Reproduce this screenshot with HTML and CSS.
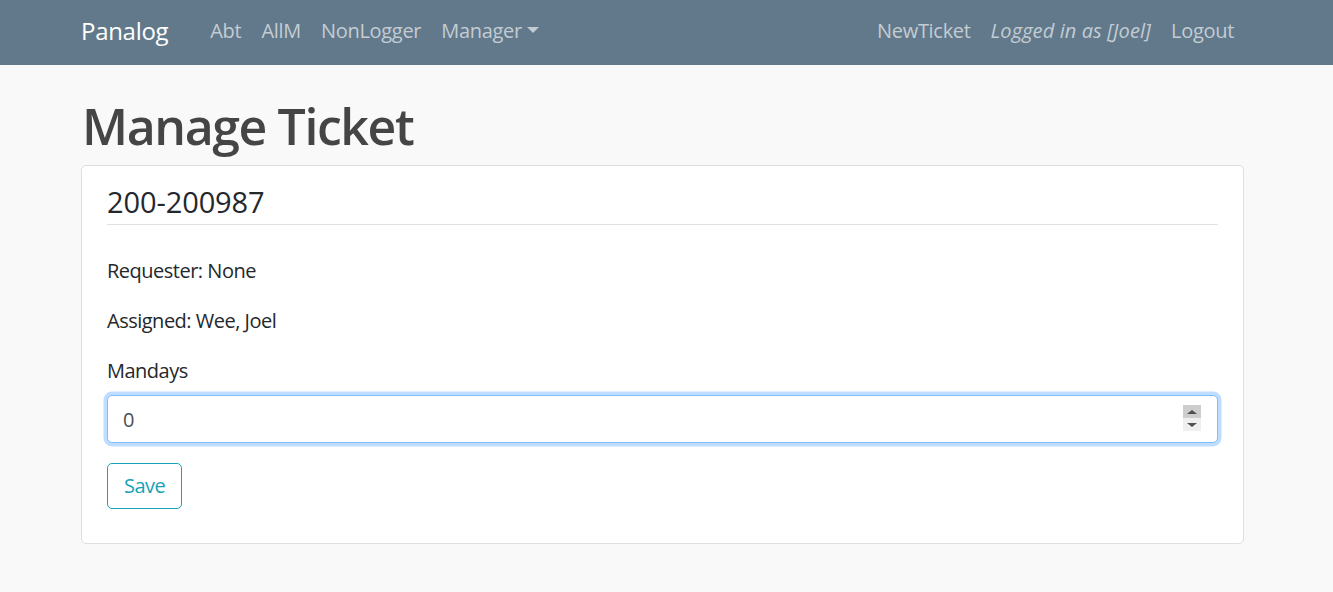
FILE: index.html
```html
<!DOCTYPE html>
<html lang="en">
<head>
<meta charset="utf-8">
<title>Manage Ticket - Panalog</title>
<link rel="stylesheet" href="styles.css">
</head>
<body>
<nav class="navbar">
  <div class="nav-inner">
    <a class="brand" href="#">Panalog</a>
    <ul class="nav-list">
      <li><a class="nav-link" href="#">Abt</a></li>
      <li><a class="nav-link" href="#">AllM</a></li>
      <li><a class="nav-link" href="#">NonLogger</a></li>
      <li><a class="nav-link dropdown-toggle" href="#">Manager</a></li>
    </ul>
    <ul class="nav-list nav-right">
      <li><a class="nav-link" href="#">NewTicket</a></li>
      <li><span class="nav-link nav-text">Logged in as [Joel]</span></li>
      <li><a class="nav-link" href="#">Logout</a></li>
    </ul>
  </div>
</nav>
<main class="container">
  <h1 class="page-title">Manage Ticket</h1>
  <div class="card">
    <div class="card-body">
      <h4 class="card-title">200-200987</h4>
      <p class="info">Requester: None</p>
      <p class="info">Assigned: Wee, Joel</p>
      <form class="ticket-form">
        <div class="form-group">
          <label class="form-label" for="mandays">Mandays</label>
          <div class="input-wrap">
            <input class="form-control" id="mandays" type="number" value="0">
            <span class="spinner" aria-hidden="true">
              <span class="spin spin-up"><span class="tri-up"></span></span>
              <span class="spin spin-down"><span class="tri-down"></span></span>
            </span>
          </div>
        </div>
        <button class="btn-outline-info" type="button">Save</button>
      </form>
    </div>
  </div>
</main>
</body>
</html>
```
FILE: styles.css
```css
* { box-sizing: border-box; }

html, body {
  margin: 0;
  padding: 0;
}

body {
  background: #f9f9f9;
  font-family: "Open Sans", "Noto Sans", "Liberation Sans", sans-serif;
  font-size: 20px;
  line-height: 30px;
  color: #24282c;
  letter-spacing: -0.5px;
}

/* Navbar */
.navbar {
  background: #62798b;
  height: 65px;
}

.nav-inner {
  height: 100%;
  display: flex;
  align-items: center;
  padding: 0 89px 3px 81px;
}

.brand {
  color: #ffffff;
  text-decoration: none;
  font-size: 24px;
  letter-spacing: -0.3px;
  margin-right: 32px;
}

.nav-list {
  list-style: none;
  margin: 0;
  padding: 0;
  display: flex;
  align-items: center;
}

.nav-right {
  margin-left: auto;
}

.nav-link {
  display: block;
  padding: 0 10px;
  color: #c3ccd3;
  text-decoration: none;
  letter-spacing: -0.3px;
}

.nav-text {
  font-style: italic;
  letter-spacing: 0.1px;
}

.dropdown-toggle::after {
  content: "";
  display: inline-block;
  margin-left: 5px;
  vertical-align: 5px;
  border-top: 6px solid #c3ccd3;
  border-left: 6px solid transparent;
  border-right: 6px solid transparent;
}

/* Main */
.container {
  padding: 31px 89px 40px 81px;
}

.page-title {
  margin: 0 0 9px 1px;
  font-size: 50px;
  line-height: 60px;
  font-weight: 600;
  color: #454545;
  letter-spacing: -1.4px;
}

.card {
  background: #ffffff;
  border: 1px solid #dfdfdf;
  border-radius: 5px;
}

.card-body {
  padding: 18px 25px 34px;
}

.card-title {
  margin: 0 0 31px;
  padding-bottom: 5px;
  border-bottom: 1px solid #dee2e6;
  font-size: 29px;
  line-height: 35px;
  font-weight: 400;
  letter-spacing: -0.1px;
  color: #24282c;
}

.info {
  margin: 0 0 20px;
}

.ticket-form {
  margin: 0;
}

.form-group {
  margin-bottom: 20px;
}

.form-label {
  display: block;
  margin-bottom: 9px;
}

.input-wrap {
  position: relative;
}

.form-control {
  display: block;
  width: 100%;
  height: 48px;
  padding: 0 15px;
  font-family: inherit;
  font-size: 20px;
  letter-spacing: -0.5px;
  color: #495057;
  background: #ffffff;
  border: 1px solid #80bdff;
  border-radius: 5px;
  box-shadow: 0 0 0 3.5px rgba(128, 189, 255, 0.5);
  outline: none;
  -moz-appearance: textfield;
}

.form-control::-webkit-outer-spin-button,
.form-control::-webkit-inner-spin-button {
  -webkit-appearance: none;
  margin: 0;
}

.spinner {
  position: absolute;
  right: 17px;
  top: 10px;
  width: 18px;
  height: 26px;
  display: flex;
  flex-direction: column;
}

.spin {
  flex: 1;
  display: flex;
  align-items: center;
  justify-content: center;
}

.spin-up { background: #cdcdcd; }
.spin-down { background: #efefef; }

.tri-up {
  width: 0;
  height: 0;
  border-left: 5px solid transparent;
  border-right: 5px solid transparent;
  border-bottom: 4px solid #505050;
}

.tri-down {
  width: 0;
  height: 0;
  border-left: 5px solid transparent;
  border-right: 5px solid transparent;
  border-top: 4px solid #505050;
}

.btn-outline-info {
  display: inline-block;
  height: 46px;
  padding: 7px 16px;
  font-family: inherit;
  font-size: 20px;
  line-height: 30px;
  letter-spacing: -0.5px;
  color: #17a2b8;
  background: transparent;
  border: 1px solid #17a2b8;
  border-radius: 5px;
  cursor: pointer;
}
```
